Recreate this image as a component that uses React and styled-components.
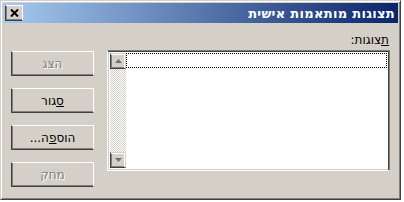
import styled, { createGlobalStyle } from "styled-components"

const Global = createGlobalStyle`
  html, body {
    margin: 0;
    padding: 0;
    background: #ffffff;
  }
  body {
    font-family: "DejaVu Sans", "Liberation Sans", sans-serif;
  }
`;

const Window = styled.div`
  direction: rtl;
  box-sizing: border-box;
  width: 401px;
  height: 200px;
  background: #d4d0c8;
  border-top: 1px solid #d4d0c8;
  border-left: 1px solid #d4d0c8;
  border-right: 1px solid #404040;
  border-bottom: 1px solid #404040;
  box-shadow: inset 1px 1px 0 #ffffff, inset -1px -1px 0 #808080;
  padding: 2px;
  display: flex;
  flex-direction: column;
`;

const TitleBar = styled.div`
  height: 20px;
  display: flex;
  align-items: center;
  justify-content: space-between;
  padding: 0 3px 0 2px;
  background: linear-gradient(to left, #0a246a, #a6caf0);
`;

const Title = styled.div`
  color: #ffffff;
  font-family: "DejaVu Sans", sans-serif;
  font-weight: bold;
  font-size: 13px;
  letter-spacing: 0.3px;
`;

const CloseButton = styled.div`
  box-sizing: border-box;
  width: 18px;
  height: 16px;
  background: #d4d0c8;
  border-top: 1px solid #ffffff;
  border-right: 1px solid #ffffff;
  border-left: 1px solid #404040;
  border-bottom: 1px solid #404040;
  box-shadow: inset 1px -1px 0 #808080;
  display: flex;
  align-items: center;
  justify-content: center;
`;

const Body = styled.div`
  flex: 1;
  display: flex;
  flex-direction: row;
  padding: 0 8px 0 8px;
  gap: 13px;
`;

const ListColumn = styled.div`
  flex: 1;
  display: flex;
  flex-direction: column;
  padding-top: 10px;
`;

const Label = styled.div`
  font-size: 12px;
  height: 17px;
  line-height: 15px;
  color: #000;
  padding-right: 1px;
`;

const ListBox = styled.div`
  box-sizing: border-box;
  height: 121px;
  background: #ffffff;
  border-top: 1px solid #808080;
  border-right: 1px solid #808080;
  border-left: 1px solid #ffffff;
  border-bottom: 1px solid #ffffff;
  box-shadow: inset -1px 1px 0 #404040, inset 1px -1px 0 #d4d0c8;
  display: flex;
  flex-direction: row;
  padding: 2px;
`;

const ListArea = styled.div`
  flex: 1;
`;

const FocusRow = styled.div`
  height: 13px;
  border: 1px dotted #000;
`;

const ScrollBar = styled.div`
  width: 16px;
  display: flex;
  flex-direction: column;
  justify-content: space-between;
  background-color: #ffffff;
  background-image: repeating-conic-gradient(#d4d0c8 0 25%, #ffffff 0 50%);
  background-size: 2px 2px;
`;

const ArrowButton = styled.div`
  box-sizing: border-box;
  width: 16px;
  height: 16px;
  background: #d4d0c8;
  border-top: 1px solid #d4d0c8;
  border-right: 1px solid #d4d0c8;
  border-left: 1px solid #404040;
  border-bottom: 1px solid #404040;
  box-shadow: inset -1px 1px 0 #ffffff, inset 1px -1px 0 #808080;
  display: flex;
  align-items: center;
  justify-content: center;
`;

const ButtonColumn = styled.div`
  width: 83px;
  display: flex;
  flex-direction: column;
  gap: 12px;
  padding-top: 28px;
`;

const Button = styled.div`
  box-sizing: border-box;
  height: 25px;
  background: #d4d0c8;
  border-top: 1px solid #ffffff;
  border-right: 1px solid #ffffff;
  border-left: 1px solid #404040;
  border-bottom: 1px solid #404040;
  box-shadow: inset 1px -1px 0 #808080;
  display: flex;
  align-items: center;
  justify-content: center;
  font-size: 12px;
  color: ${(p) => (p.disabled ? "#808080" : "#000000")};
  text-shadow: ${(p) => (p.disabled ? "1px 1px 0 #ffffff" : "none")};
`;

const Arrow = ({ down }) => (
  <svg width="7" height="4" viewBox="0 0 7 4">
    <path d={down ? "M0 0h7L3.5 4z" : "M3.5 0L7 4H0z"} fill="#707070" />
  </svg>
)

export default function App() {
  return (
    <>
      <Global />
      <Window>
        <TitleBar>
          <Title>תצוגות מותאמות אישית</Title>
          <CloseButton>
            <svg width="9" height="8" viewBox="0 0 9 8">
              <path d="M1 0.5L8 7.5M8 0.5L1 7.5" stroke="#000" strokeWidth="2" />
            </svg>
          </CloseButton>
        </TitleBar>
        <Body>
          <ListColumn>
            <Label>
              <u>ת</u>צוגות:
            </Label>
            <ListBox>
              <ListArea>
                <FocusRow />
              </ListArea>
              <ScrollBar>
                <ArrowButton>
                  <Arrow />
                </ArrowButton>
                <ArrowButton>
                  <Arrow down />
                </ArrowButton>
              </ScrollBar>
            </ListBox>
          </ListColumn>
          <ButtonColumn>
            <Button disabled>הצג</Button>
            <Button>
              <span>
                <u>ס</u>גור
              </span>
            </Button>
            <Button>
              <span>
                הוס<u>פ</u>ה...
              </span>
            </Button>
            <Button disabled>מחק</Button>
          </ButtonColumn>
        </Body>
      </Window>
    </>
  )
}
